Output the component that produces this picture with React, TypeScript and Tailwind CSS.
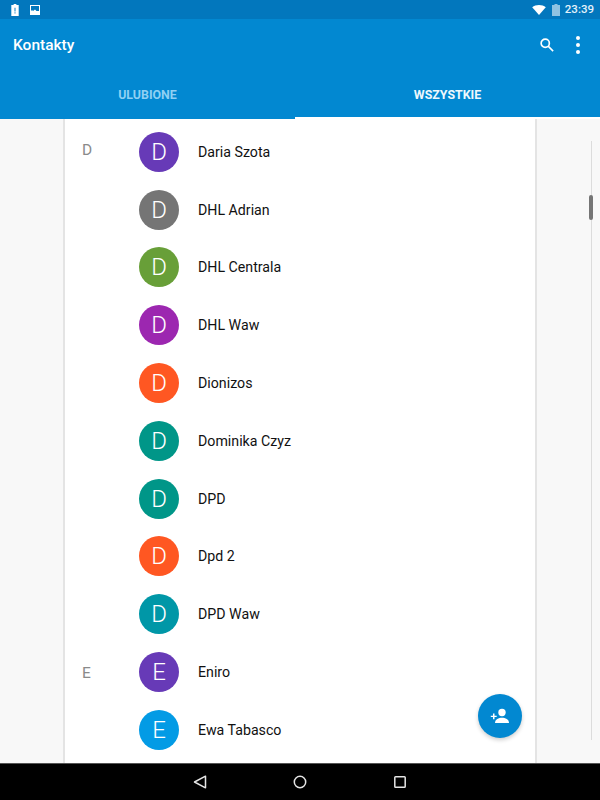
const rows: [string, string, string, string?, string?][] = [
  ["D", "Daria Szota", "bg-[#673ab7]", "D", "pt-[20px]"],
  ["D", "DHL Adrian", "bg-[#757575]"],
  ["D", "DHL Centrala", "bg-[#689f38]"],
  ["D", "DHL Waw", "bg-[#9c27b0]"],
  ["D", "Dionizos", "bg-[#ff5722]"],
  ["D", "Dominika Czyz", "bg-[#009688]"],
  ["D", "DPD", "bg-[#009688]"],
  ["D", "Dpd 2", "bg-[#ff5722]"],
  ["D", "DPD Waw", "bg-[#0097a7]"],
  ["E", "Eniro", "bg-[#673ab7]", "E", "pt-[23px]"],
  ["E", "Ewa Tabasco", "bg-[#039be5]"],
];

function App() {
  return (
    <div className="relative flex h-[800px] w-[600px] flex-col overflow-hidden bg-[#f8f8f8] font-['Roboto',sans-serif]">
      <div className="flex h-[19px] shrink-0 items-center justify-between bg-[#0277bd] pl-[11px] pr-[6px] text-white">
        <div className="flex items-center gap-[11px]">
          <svg width="8" height="12" viewBox="0 0 8 13">
            <path d="M2.500 0h3v1.200H8V13H0V1.200h2.500z" fill="#fff" />
            <path d="M3.500 4h1v4h-1zM3.500 9h1v1.200h-1z" fill="#0277bd" />
          </svg>
          <svg width="10" height="10" viewBox="0 0 10 10">
            <path d="M0 0h10v10H0z" fill="#fff" />
            <path d="M1 1h8v5H6.500L5 4.500 3 6 2 5 1 6z" fill="#0277bd" />
          </svg>
        </div>
        <div className="flex items-center">
          <svg width="14" height="10" viewBox="0 0 15 11" className="mr-[6px]">
            <path d="M0 2.500C2 .9 4.600 0 7.500 0S13 .9 15 2.500L7.500 11z" fill="#fff" />
          </svg>
          <svg width="8" height="12" viewBox="0 0 8 12" className="mr-[5px]">
            <path d="M2.500 0h3v1H8v11H0V1h2.500z" fill="#90c3e2" />
          </svg>
          <span className="text-[11.5px] font-medium leading-none text-[#e3f1fa]">23:39</span>
        </div>
      </div>

      <div className="flex h-[100px] shrink-0 flex-col bg-[#0288d1] text-white">
        <div className="flex h-[52px] shrink-0 items-center justify-between pl-[13px] pr-[20px]">
          <span className="pt-[2px] text-[15.5px] font-medium leading-none">Kontakty</span>
          <div className="flex items-center gap-[22px]">
            <svg width="14" height="14" viewBox="0 0 16 16" fill="none" stroke="#fff" strokeWidth="1.900">
              <circle cx="6" cy="6" r="4.700" />
              <path d="M9.300 9.300 15 15" />
            </svg>
            <div className="flex flex-col gap-[3px]">
              <span className="h-[4px] w-[4px] rounded-full bg-white" />
              <span className="h-[4px] w-[4px] rounded-full bg-white" />
              <span className="h-[4px] w-[4px] rounded-full bg-white" />
            </div>
          </div>
        </div>
        <div className="flex flex-1 text-[12.4px] font-bold leading-none">
          <div className="flex w-[295px] items-center justify-center border-b-[2px] border-transparent pt-[2px] text-[#8fd0f3]">
            ULUBIONE
          </div>
          <div className="flex flex-1 items-center justify-center border-b-[2px] border-white pt-[2px] text-[#eef8fd]">
            WSZYSTKIE
          </div>
        </div>
      </div>

      <div className="mx-[63px] min-h-0 flex-1 overflow-hidden border-x-2 border-[#e4e4e4] bg-white pt-[4px]">
        {rows.map(([letter, name, color, section, sectionPad]) => (
          <div key={name} className="flex h-[57.8px] items-center">
            <div className={`h-full w-[74px] pl-[17px] text-[15.5px] leading-none text-[#8a8a8a] ${sectionPad ?? ""}`}>
              {section}
            </div>
            <div className={`flex h-[40px] w-[40px] shrink-0 items-center justify-center rounded-full text-[24px] font-light leading-none text-white ${color}`}>
              {letter}
            </div>
            <span className="ml-[19px] text-[14.2px] leading-none text-[#111111]">{name}</span>
          </div>
        ))}
      </div>

      <div className="absolute left-[591px] top-[141px] h-[599px] w-px bg-[#dcdcdc]" />
      <div className="absolute left-[589px] top-[195px] h-[25px] w-[4px] rounded-full bg-[#757575]" />

      <div className="absolute left-[478px] top-[694px] flex h-[44px] w-[44px] items-center justify-center rounded-full bg-[#0288d1] shadow-[0_2px_4px_rgba(0,0,0,0.2)]">
        <svg width="20" height="16" viewBox="0 0 20 16" fill="#fff">
          <circle cx="12" cy="4.500" r="3.700" />
          <path d="M5 15c0-3.600 3.600-5.200 7-5.200s7 1.600 7 5.200z" />
          <path d="M3 5.500h1.500v2.200h2.200v1.400H4.500v2.200H3V9.100H.8V7.700H3z" />
        </svg>
      </div>

      <div className="flex h-[37px] shrink-0 items-center justify-center gap-[86px] border-t border-[#555] bg-black">
        <svg width="14" height="14" viewBox="0 0 14 14" fill="none" stroke="#e5e5e5" strokeWidth="1.500">
          <path d="M12.500 1.200v11.600L1.500 7z" strokeLinejoin="round" />
        </svg>
        <svg width="14" height="14" viewBox="0 0 14 14" fill="none" stroke="#e5e5e5" strokeWidth="1.500">
          <circle cx="7" cy="7" r="5.700" />
        </svg>
        <svg width="14" height="14" viewBox="0 0 14 14" fill="none" stroke="#e5e5e5" strokeWidth="1.500">
          <rect x="1.800" y="1.800" width="10.400" height="10.400" rx="0.800" />
        </svg>
      </div>
    </div>
  );
}

export default App;
